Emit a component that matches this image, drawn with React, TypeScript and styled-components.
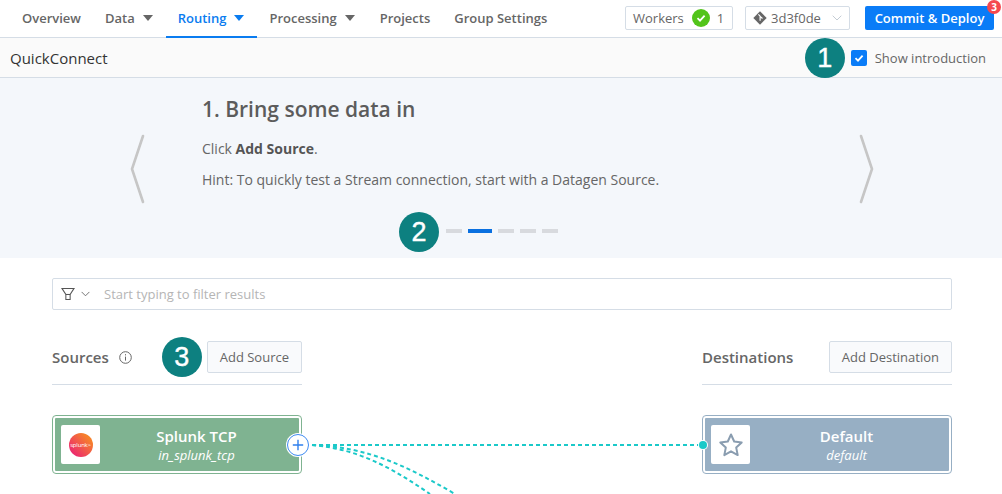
import React from "react";
import styled, { createGlobalStyle } from "styled-components";

const GlobalStyle = createGlobalStyle`
  html, body {
    margin: 0;
    height: 100%;
    background: #fff;
    overflow: hidden;
    font-family: "Open Sans", "Liberation Sans", sans-serif;
    color: #555;
  }
`;

const Page = styled.div`
  width: 1002px;
  height: 494px;
  overflow: hidden;
  position: relative;
`;

const TopBar = styled.header`
  height: 37px;
  border-bottom: 1px solid #d5dde6;
  display: flex;
  align-items: stretch;
  justify-content: space-between;
  padding: 0 8px 0 10px;
`;

const Tabs = styled.nav`
  display: flex;
`;

const Tab = styled.a<{ $active?: boolean }>`
  display: flex;
  align-items: center;
  gap: 8px;
  padding: 0 12px;
  height: 38px;
  box-sizing: border-box;
  font-size: 13px;
  font-weight: 600;
  color: ${(p) => (p.$active ? "#0a7cf0" : "#666")};
  border-bottom: 2px solid ${(p) => (p.$active ? "#0a7cf0" : "transparent")};
`;

const Caret = styled.span<{ $active?: boolean }>`
  width: 0;
  height: 0;
  margin-right: 1px;
  border-left: 5px solid transparent;
  border-right: 5px solid transparent;
  border-top: 6px solid ${(p) => (p.$active ? "#0a7cf0" : "#666")};
`;

const TopActions = styled.div`
  display: flex;
  align-items: flex-start;
  padding-top: 6px;
`;

const Chip = styled.div`
  height: 24px;
  box-sizing: border-box;
  border: 1px solid #d5dde6;
  border-radius: 2px;
  display: flex;
  align-items: center;
  font-size: 13px;
  color: #666;
`;

const WorkersChip = styled(Chip)`
  width: 108px;
  padding: 0 7px;
  margin-right: 12px;
`;

const WorkerCount = styled.span`
  margin-left: 7px;
`;

const CheckDot = styled.span`
  width: 18px;
  height: 18px;
  margin-left: 8px;
  border-radius: 50%;
  background: #52c41a;
  display: flex;
  align-items: center;
  justify-content: center;
`;

const BranchChip = styled(Chip)`
  width: 105px;
  padding: 0 7px 0 7px;
  margin-right: 15px;
  gap: 4px;
`;

const ChevronGap = styled.span`
  width: 3px;
`;

const DeployButton = styled.button`
  position: relative;
  width: 129px;
  height: 24px;
  border: 0;
  border-radius: 2px;
  background: #0a7cf7;
  color: #fff;
  font-family: inherit;
  font-size: 13px;
  font-weight: 600;
  padding: 0;
`;

const CountBadge = styled.span`
  position: absolute;
  top: -6px;
  right: -7px;
  width: 14px;
  height: 14px;
  border-radius: 50%;
  background: #f5484f;
  color: #fff;
  font-size: 10px;
  line-height: 14px;
  font-weight: 700;
  text-align: center;
`;

const SubHeader = styled.div`
  height: 39px;
  background: #fafafa;
  border-bottom: 1px solid #d5dde6;
  display: flex;
  align-items: center;
  justify-content: space-between;
  padding: 0 16px 0 10px;
  font-size: 15px;
  color: #333;
`;

const ShowIntro = styled.label`
  position: relative;
  display: flex;
  align-items: center;
  gap: 8px;
  font-size: 13px;
  color: #666;
`;

const Checkbox = styled.span`
  width: 16px;
  height: 16px;
  border-radius: 2px;
  background: #0a7cf7;
  display: flex;
  align-items: center;
  justify-content: center;
`;

const Callout = styled.span<{ $gap?: number; $drop?: number }>`
  position: absolute;
  width: 40px;
  height: 40px;
  border-radius: 50%;
  background: #0d8080;
  color: #fff;
  font-family: "Liberation Sans", Arial, sans-serif;
  font-size: 27px;
  font-weight: 400;
  -webkit-text-stroke: 0.4px #fff;
  line-height: 40px;
  text-align: center;
  top: calc(50% + ${(p) => p.$drop ?? 0}px);
  right: calc(100% + ${(p) => p.$gap ?? 6}px);
  transform: translateY(-50%);
`;

const Intro = styled.section`
  height: 180px;
  background: #f4f7fb;
  display: flex;
  position: relative;
`;

const IntroArrow = styled.svg<{ $left: number }>`
  position: absolute;
  top: 56px;
  left: ${(p) => p.$left}px;
`;

const IntroBody = styled.div`
  padding: 16px 0 0 202px;
  flex: 1;
  display: flex;
  flex-direction: column;
`;

const IntroTitle = styled.h2`
  margin: 0;
  font-size: 21px;
  line-height: 30px;
  font-weight: 600;
  color: #5c5c5c;
`;

const IntroText = styled.p`
  margin: 16px 0 0;
  font-size: 14px;
  line-height: 18px;
  color: #666;

  & + & {
    margin-top: 13px;
  }

  b {
    font-weight: 700;
    color: #555;
  }
`;

const Dots = styled.div`
  position: absolute;
  left: 446px;
  top: 151px;
  display: flex;
  gap: 6px;
`;

const Dot = styled.span<{ $active?: boolean }>`
  width: ${(p) => (p.$active ? 24 : 16)}px;
  height: 4px;
  background: ${(p) => (p.$active ? "#0a70e0" : "#d8dade")};
`;

const Main = styled.main`
  padding: 20px 50px 0 52px;
  position: relative;
`;

const FilterBox = styled.div`
  height: 32px;
  box-sizing: border-box;
  border: 1px solid #d5dde6;
  border-radius: 2px;
  display: flex;
  align-items: center;
  padding-left: 8px;
  font-size: 13px;
  color: #b5b5b5;
`;

const FilterIcons = styled.div`
  display: flex;
  align-items: center;
  gap: 6px;
  margin-right: 14px;
`;

const Columns = styled.div`
  display: flex;
  justify-content: space-between;
  margin-top: 31px;
`;

const Column = styled.div<{ $width: number }>`
  width: ${(p) => p.$width}px;
`;

const ColumnHead = styled.div`
  height: 44px;
  box-sizing: border-box;
  border-bottom: 1px solid #d5dde6;
  display: flex;
  align-items: flex-start;
  justify-content: space-between;
`;

const ColumnTitle = styled.h3`
  margin: 0;
  height: 32px;
  display: flex;
  align-items: center;
  gap: 10px;
  font-size: 15px;
  font-weight: 600;
  color: #666;
`;

const OutlineButton = styled.button`
  position: relative;
  height: 32px;
  box-sizing: border-box;
  border: 1px solid #d5dde6;
  border-radius: 2px;
  background: #f9fafc;
  color: #666;
  font-family: inherit;
  font-size: 13px;
  padding: 0 12px;
`;

const Card = styled.div<{ $color: string }>`
  position: relative;
  margin-top: 30px;
  height: 59px;
  box-sizing: border-box;
  border: 1px solid ${(p) => p.$color};
  border-radius: 4px;
  padding: 2px;
  background: #fff;
`;

const CardFill = styled.div<{ $color: string }>`
  height: 100%;
  background: ${(p) => p.$color};
  border-radius: 1px;
  display: flex;
  align-items: center;
  padding-left: 6px;
  color: #fff;
`;

const CardIcon = styled.div`
  width: 39px;
  height: 39px;
  flex: none;
  background: #fff;
  border-radius: 2px;
  display: flex;
  align-items: center;
  justify-content: center;
`;

const SplunkLogo = styled.div`
  width: 24px;
  height: 24px;
  border-radius: 50%;
  background: linear-gradient(45deg, #ec2a6e 15%, #f6812b 80%);
  color: #fff;
  font-size: 6px;
  line-height: 24px;
  text-align: center;
  letter-spacing: -0.2px;
`;

const CardText = styled.div`
  flex: 1;
  text-align: center;
  padding: 1px 6px 0 0;
`;

const CardName = styled.div`
  font-size: 15px;
  line-height: 20px;
  font-weight: 600;
`;

const CardId = styled.div`
  font-size: 13px;
  line-height: 19px;
  font-style: italic;
`;

const PlusPort = styled.span`
  position: absolute;
  right: -8px;
  top: 18px;
  width: 22px;
  height: 22px;
  box-sizing: border-box;
  border-radius: 50%;
  background: #fff;
  border: 1px solid #3d8bf2;
  box-shadow: 0 0 0 1px #fff;
  display: flex;
  align-items: center;
  justify-content: center;
  z-index: 2;
`;

const InPort = styled.span`
  position: absolute;
  left: -4px;
  top: 25px;
  width: 8px;
  height: 8px;
  border-radius: 50%;
  background: #1bc9c9;
  box-shadow: 0 0 0 1px #fff;
  z-index: 2;
`;

const Wires = styled.svg`
  position: absolute;
  left: 0;
  top: 0;
  pointer-events: none;
`;

const Check = () => (
  <svg width="10" height="10" viewBox="0 0 10 10" fill="none">
    <path d="M1.5 5.2 4 7.6 8.6 2.6" stroke="#fff" strokeWidth="1.8" />
  </svg>
);

const Chevron = ({ color = "#777", w = 10 }: { color?: string; w?: number }) => (
  <svg width={w} height="6" viewBox="0 0 10 6" fill="none">
    <path d="M.7.7 5 5 9.3.7" stroke={color} strokeWidth="1" />
  </svg>
);

const tabs = [
  { label: "Overview" },
  { label: "Data", menu: true },
  { label: "Routing", menu: true, active: true },
  { label: "Processing", menu: true },
  { label: "Projects" },
  { label: "Group Settings" },
];

export default function App() {
  return (
    <Page>
      <GlobalStyle />
      <TopBar>
        <Tabs>
          {tabs.map((t) => (
            <Tab key={t.label} $active={t.active}>
              {t.label}
              {t.menu && <Caret $active={t.active} />}
            </Tab>
          ))}
        </Tabs>
        <TopActions>
          <WorkersChip>
            Workers
            <CheckDot>
              <Check />
            </CheckDot>
            <WorkerCount>1</WorkerCount>
          </WorkersChip>
          <BranchChip>
            <svg width="14" height="14" viewBox="0 0 13 13">
              <path d="M6.5.3 12.7 6.5 6.5 12.7.3 6.5Z" fill="#666" />
              <path d="M5 3.2 6.6 4.8V9M6.6 5 8.8 7" stroke="#fff" strokeWidth="1.1" fill="none" />
            </svg>
            3d3f0de
            <ChevronGap />
            <Chevron color="#c4ccd4" />
          </BranchChip>
          <DeployButton>
            Commit &amp; Deploy
            <CountBadge>3</CountBadge>
          </DeployButton>
        </TopActions>
      </TopBar>

      <SubHeader>
        QuickConnect
        <ShowIntro>
          <Callout>1</Callout>
          <Checkbox>
            <Check />
          </Checkbox>
          Show introduction
        </ShowIntro>
      </SubHeader>

      <Intro>
        <IntroArrow $left={128} width="20" height="70" viewBox="0 0 20 70" fill="none">
          <path d="M15 2 4 35l11 33" stroke="#c6c6c6" strokeWidth="2.6" strokeLinecap="round" />
        </IntroArrow>
        <IntroArrow $left={855} width="20" height="70" viewBox="0 0 20 70" fill="none">
          <path d="M6 2l11 33L6 68" stroke="#c6c6c6" strokeWidth="2.6" strokeLinecap="round" />
        </IntroArrow>
        <IntroBody>
          <IntroTitle>1. Bring some data in</IntroTitle>
          <IntroText>
            Click <b>Add Source</b>.
          </IntroText>
          <IntroText>Hint: To quickly test a Stream connection, start with a Datagen Source.</IntroText>
        </IntroBody>
        <Dots>
          <Callout $gap={7} $drop={1}>2</Callout>
          <Dot />
          <Dot $active />
          <Dot />
          <Dot />
          <Dot />
        </Dots>
      </Intro>

      <Main>
        <FilterBox>
          <FilterIcons>
            <svg width="14" height="14" viewBox="0 0 15 14" fill="none">
              <path d="M1 1h13L9.8 7.5v5.5H5.2V7.5Z" stroke="#555" strokeWidth="1.1" />
              <path d="M5.2 7.5h4.6" stroke="#555" strokeWidth="1.1" />
            </svg>
            <Chevron color="#666" w={9} />
          </FilterIcons>
          Start typing to filter results
        </FilterBox>

        <Columns>
          <Column $width={250}>
            <ColumnHead>
              <ColumnTitle>
                Sources
                <svg width="13" height="13" viewBox="0 0 13 13" fill="none">
                  <circle cx="6.5" cy="6.5" r="5.8" stroke="#666" />
                  <path d="M6.5 5.6v4M6.5 3.2v1.2" stroke="#666" />
                </svg>
              </ColumnTitle>
              <OutlineButton>
                <Callout>3</Callout>
                Add Source
              </OutlineButton>
            </ColumnHead>
            <Card $color="#7fb391">
              <CardFill $color="#7fb391">
                <CardIcon>
                  <SplunkLogo>splunk&gt;</SplunkLogo>
                </CardIcon>
                <CardText>
                  <CardName>Splunk TCP</CardName>
                  <CardId>in_splunk_tcp</CardId>
                </CardText>
              </CardFill>
              <PlusPort>
                <svg width="12" height="12" viewBox="0 0 12 12" fill="none">
                  <path d="M6 .8v10.4M.8 6h10.4" stroke="#2f80ed" strokeWidth="1.4" />
                </svg>
              </PlusPort>
            </Card>
          </Column>
          <Column $width={250}>
            <ColumnHead>
              <ColumnTitle>Destinations</ColumnTitle>
              <OutlineButton>Add Destination</OutlineButton>
            </ColumnHead>
            <Card $color="#97afc4">
              <CardFill $color="#97afc4">
                <CardIcon>
                  <svg width="26" height="26" viewBox="0 0 26 26" fill="none">
                    <path
                      d="M13 2.5l3.2 7 7.5.9-5.5 5.2 1.5 7.5-6.7-3.8-6.7 3.8 1.5-7.5-5.5-5.2 7.5-.9Z"
                      stroke="#8a9db0"
                      strokeWidth="2"
                      strokeLinejoin="round"
                    />
                  </svg>
                </CardIcon>
                <CardText>
                  <CardName>Default</CardName>
                  <CardId>default</CardId>
                </CardText>
              </CardFill>
              <InPort />
            </Card>
          </Column>
        </Columns>
      </Main>

      <Wires width="1002" height="494" viewBox="0 0 1002 494" fill="none">
        <g stroke="#1bc9c9" strokeWidth="2" strokeDasharray="4 3">
          <path d="M312 445H702" />
          <path d="M312 445C370 447 410 468 455 494" />
          <path d="M312 445C360 449 395 470 430 494" />
        </g>
      </Wires>
    </Page>
  );
}
